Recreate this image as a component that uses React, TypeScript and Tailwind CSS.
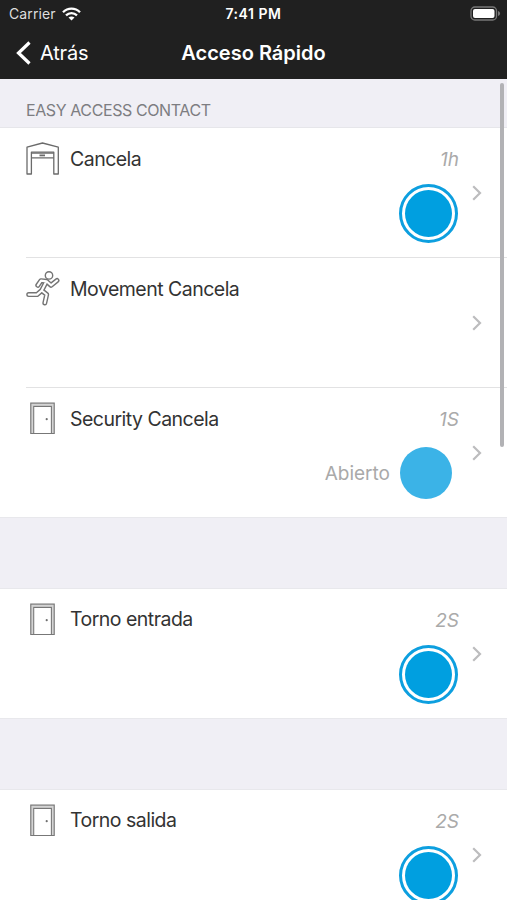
type IconName = "gate" | "runner" | "door";

interface Access {
    name: string;
    icon: IconName;
    time?: string;
    status?: string;
}

const contacts: Access[] = [
    { name: "Cancela", icon: "gate", time: "1h" },
    { name: "Movement Cancela", icon: "runner" },
    { name: "Security Cancela", icon: "door", time: "1S", status: "Abierto" },
];

function GateIcon() {
    return (
        <svg width="34" height="34" viewBox="0 0 34 34" fill="none" stroke="#6b6b6b" strokeWidth="1.3" strokeLinejoin="round">
            <path d="M1 5.2 16.5 1 32.3 5.2V32H27.8V10.2H5.4V32H1Z" />
            <path d="M5.4 11.2H27.8M5.4 15.8H27.8" />
            <path d="M13.5 13.4H19" strokeWidth="1.8" />
        </svg>
    );
}

const limbs = "M11.8 14.3 15 9.7 20.5 10.3 15.7 19.5 20.7 23.5 18.8 32M20.5 10.3 25 14.3 31 9.5M15.7 19.5 11 23.6H2.7";

function RunnerIcon() {
    return (
        <svg className="-mt-px" width="34" height="35" viewBox="0 0 34 35" fill="none" strokeLinecap="round" strokeLinejoin="round">
            <path d={limbs} stroke="#747474" strokeWidth="5" />
            <path d={limbs} stroke="#fff" strokeWidth="2.2" />
            <circle cx="23" cy="4.4" r="3.7" fill="#fff" stroke="#747474" strokeWidth="1.4" />
        </svg>
    );
}

function DoorIcon() {
    return (
        <svg width="34" height="34" viewBox="0 0 34 34" fill="none" stroke="#777">
            <path d="M6.2 31V2.8H26.8V31" stroke="#d4d4d4" strokeWidth="2" />
            <path d="M4.8 31.5V1.2H28.2V31.5Z" strokeWidth="1.2" />
            <path d="M7.7 31.5V4.4H25.4V31.5" strokeWidth="1.1" />
            <circle cx="20.7" cy="17.2" r="1.1" fill="#6f6f6f" stroke="none" />
        </svg>
    );
}

function Row({ item, leading = "leading-[62px]" }: { item: Access; leading?: string }) {
    return (
        <div className="flex h-[130px] bg-white pl-[26px]">
            <div className="flex h-[62px] w-11 items-center">
                {item.icon === "gate" && <GateIcon />}
                {item.icon === "runner" && <RunnerIcon />}
                {item.icon === "door" && <DoorIcon />}
            </div>
            <h3 className={`h-[62px] text-[19.5px] tracking-[-0.52px] text-[#333] ${leading}`}>{item.name}</h3>
            <div className="ml-auto flex flex-col items-end">
                <p className="h-14 text-[19px] leading-[63px] text-[#aaa] italic">{item.time}</p>
                {item.status ? (
                    <div className="mt-[3px] mr-[7px] flex items-center gap-[10px]">
                        <span className="pt-[3px] text-[19px] text-[#a9a9a9]">{item.status}</span>
                        <span className="h-[52px] w-[52px] rounded-full bg-[#3bb3e7]"></span>
                    </div>
                ) : (
                    item.time && (
                        <span className="mr-px flex h-[59px] w-[59px] items-center justify-center rounded-full border-[3px] border-[#0d9fdf]">
                            <span className="h-[47px] w-[47px] rounded-full bg-[#009fe0]"></span>
                        </span>
                    )
                )}
            </div>
            <div className="flex w-12 justify-center pr-[13px]">
                <svg className="mt-[57px]" width="10" height="16" viewBox="0 0 10 16" fill="none" stroke="#bcbcbe" strokeWidth="2.2">
                    <path d="M1.2 1.2 8 8 1.2 14.8" />
                </svg>
            </div>
        </div>
    );
}

function Header() {
    return (
        <header className="h-[79px] bg-[#202020] text-white">
            <div className="grid h-[27px] grid-cols-3 items-center">
                <div className="flex items-center gap-[6px] pl-[9px] text-[#dedede]">
                    <span className="text-[14px] tracking-[0.1px]">Carrier</span>
                    <svg width="19" height="14" viewBox="0 0 19 14" fill="none" stroke="#fff" strokeWidth="2.3">
                        <path d="M1 5.2C5.8 .3 13.2 .3 18 5.2" />
                        <path d="M4 8.4C7.2 5.3 11.8 5.3 15 8.4" />
                        <path d="M9.5 13.5 6.5 10.6C8.2 9.1 10.8 9.1 12.5 10.6Z" fill="#fff" stroke="none" />
                    </svg>
                </div>
                <span className="text-center text-[14px] font-semibold tracking-[0.55px]">7:41 PM</span>
                <svg className="ml-auto mr-[6px]" width="31" height="15" viewBox="0 0 31 15">
                    <rect x="1" y="1" width="25.5" height="13" rx="3.8" fill="none" stroke="#777" strokeWidth="1.3" />
                    <rect x="3" y="3" width="21.5" height="9" rx="2" fill="#fff" />
                    <path d="M28 5C30.8 6 30.8 9 28 10Z" fill="#777" />
                </svg>
            </div>
            <div className="grid h-[52px] grid-cols-[170px_1fr_170px] items-center">
                <div className="flex items-center gap-[9px] pl-4">
                    <svg width="15" height="24" viewBox="0 0 15 24" fill="none" stroke="#fff" strokeWidth="3.2">
                        <path d="M13.5 1.5 2.5 12 13.5 22.5" />
                    </svg>
                    <span className="text-[20px] tracking-[-0.2px]">Atrás</span>
                </div>
                <h1 className="text-center text-[20px] font-semibold whitespace-nowrap">Acceso Rápido</h1>
            </div>
        </header>
    );
}

function App() {
    return (
        <div className="relative h-[900px] w-[507px] overflow-hidden bg-[#f0eff5] font-['Inter',sans-serif]">
            <Header />
            <h2 className="h-[49px] border-b border-[#e6e6ea] pt-[19px] pl-[26px] text-[16px] leading-6 tracking-[-0.4px] text-[#7d7d81]">EASY ACCESS CONTACT</h2>
            <div className="h-[389px] bg-white">
                {contacts.map((item, i) => (
                    <div key={item.name} className="relative">
                        {i > 0 && <div className="absolute top-[-1px] right-0 left-[26px] h-px bg-[#e2e2e3]"></div>}
                        <Row item={item} />
                    </div>
                ))}
            </div>
            <div className="relative h-[72px] border-y border-[#e8e8ec] bg-[#f0eff5]"></div>
            <Row item={{ name: "Torno entrada", icon: "door", time: "2S" }} leading="leading-[61px]" />
            <div className="relative -mt-px h-[72px] border-y border-[#e8e8ec] bg-[#f0eff5]"></div>
            <Row item={{ name: "Torno salida", icon: "door", time: "2S" }} leading="leading-[61px]" />
            <div className="absolute top-[83px] right-[3px] h-[364px] w-1 rounded-full bg-[#b2b2b5]"></div>
        </div>
    );
}

export default App;
